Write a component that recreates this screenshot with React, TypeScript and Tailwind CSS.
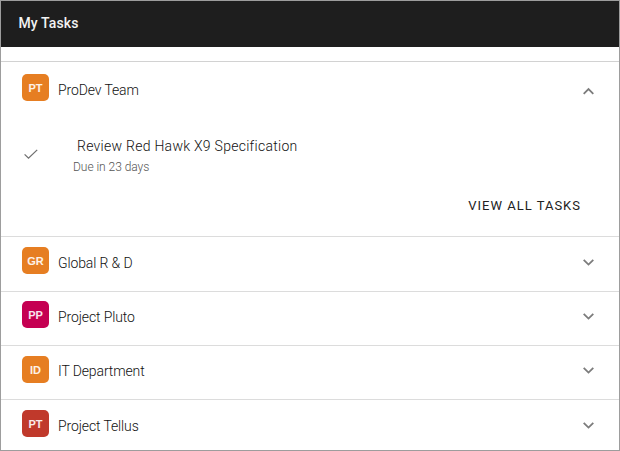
type Team = {
  initials: string;
  name: string;
  color: string;
  height: string;
  pad: string;
  labelPad?: string;
  iconPad?: string;
};

const teams: Team[] = [
  { initials: 'GR', name: 'Global R & D', color: 'bg-[#e67e22]', height: 'h-[55px]', pad: 'pt-[10px]' },
  { initials: 'PP', name: 'Project Pluto', color: 'bg-[#c50052]', height: 'h-[54px]', pad: 'pt-[9px]' },
  { initials: 'ID', name: 'IT Department', color: 'bg-[#e67e22]', height: 'h-[54px]', pad: 'pt-[10px]', labelPad: 'pt-[5px]', iconPad: 'pt-[3px]' },
  { initials: 'PT', name: 'Project Tellus', color: 'bg-[#c0392b]', height: 'h-[51px]', pad: 'pt-[10px]' },
];

function Badge({ initials, color }: { initials: string; color: string }) {
  return (
    <span
      className={`flex size-[27px] shrink-0 items-center justify-center rounded-[5px] pt-px font-['Liberation_Sans',sans-serif] text-[11px] font-bold leading-none text-white/90 ${color}`}
    >
      {initials}
    </span>
  );
}

function Chevron({ up = false }: { up?: boolean }) {
  return (
    <svg viewBox="0 0 22 22" className="size-[22px] shrink-0" fill="none" stroke="#7c7c7c" strokeWidth="1.8">
      <path d={up ? 'M5.7 13.9 10.5 9.1l4.8 4.8' : 'M5.7 8.8 10.5 13.6l4.8-4.8'} />
    </svg>
  );
}

type RowHeadProps = {
  initials: string;
  name: string;
  color: string;
  up?: boolean;
  labelPad?: string;
  iconPad?: string;
};

function RowHead({ initials, name, color, up, labelPad = 'pt-[6px]', iconPad = 'pt-[4px]' }: RowHeadProps) {
  return (
    <div className="flex items-start">
      <Badge initials={initials} color={color} />
      <span className={`ml-[9px] flex-1 text-[14px] font-light leading-5 tracking-[-0.12px] text-[#111] ${labelPad}`}>
        {name}
      </span>
      <span className={iconPad}>
        <Chevron up={up} />
      </span>
    </div>
  );
}

export default function App() {
  return (
    <div className="flex h-[451px] w-[620px] flex-col overflow-hidden border border-[#9d9d9d] bg-white font-[Roboto,sans-serif]">
      <header className="flex h-[46px] shrink-0 items-center bg-[#1e1e1e] pl-[17.5px]">
        <h1 className="-mt-0.5 text-[14px] font-medium leading-5 tracking-[0.1px] text-[#f2f2f2]">My Tasks</h1>
      </header>
      <main className="pt-[14px]">
        <section className="h-[175px] border-t border-[#d2d2d2] pl-[21px] pr-[19px] pt-3">
          <RowHead initials="PT" name="ProDev Team" color="bg-[#e67e22]" up iconPad="pt-[6px]" />
          <div className="mt-[34px] flex">
            <svg viewBox="0 0 16 14" className="ml-[1px] mt-[11px] h-[14px] w-4" fill="none" stroke="#707070" strokeWidth="1.3">
              <path d="M1.6 7.4 5.5 11.2 14.2 2.9" />
            </svg>
            <div className="ml-[34px]">
              <p className="pl-[4px] text-[14px] font-light leading-5 tracking-[0.27px] text-[#111]">Review Red Hawk X9 Specification</p>
              <p className="mt-px text-[12px] font-light leading-5 tracking-[-0.04px] text-[#555]">Due in 23 days</p>
            </div>
          </div>
          <div className="mt-[19px] flex justify-end pr-[19px]">
            <button className="text-[13px] font-normal leading-5 tracking-[1px] text-[#222]">VIEW ALL TASKS</button>
          </div>
        </section>
        {teams.map((team) => (
          <section key={team.name} className={`border-t border-[#dcdcdc] pl-[21px] pr-[19px] ${team.height} ${team.pad}`}>
            <RowHead
              initials={team.initials}
              name={team.name}
              color={team.color}
              labelPad={team.labelPad}
              iconPad={team.iconPad}
            />
          </section>
        ))}
      </main>
    </div>
  );
}
